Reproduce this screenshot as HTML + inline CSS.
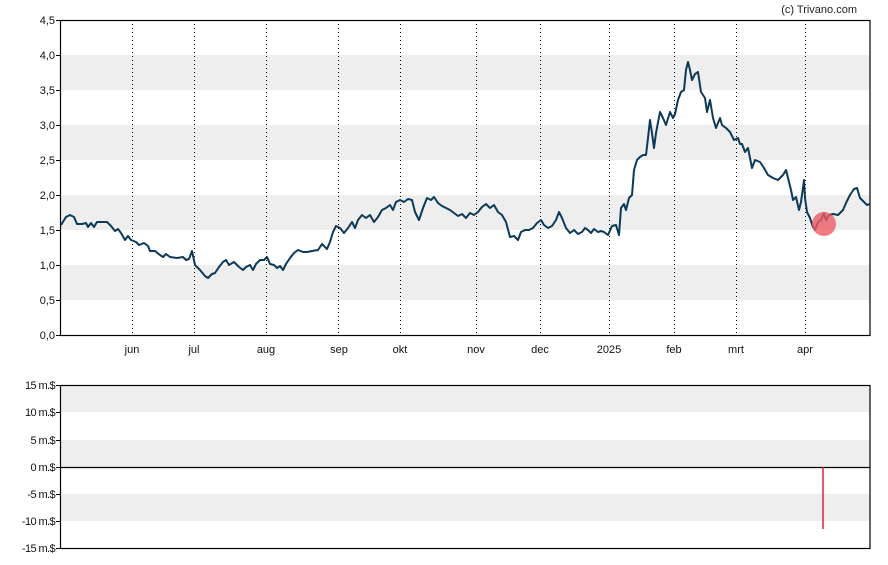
<!DOCTYPE html>
<html><head><meta charset="utf-8"><style>
html,body{margin:0;padding:0;background:#fff;}
svg{display:block;font-family:"Liberation Sans",sans-serif;}
</style></head><body>
<svg width="888" height="565" viewBox="0 0 888 565" xmlns="http://www.w3.org/2000/svg">
<rect width="888" height="565" fill="#fff"/>
<text x="857" y="13" font-size="11" text-anchor="end" fill="#222">(c) Trivano.com</text>
<g fill="#eeeeee">
<rect x="61" y="55" width="809" height="35"/>
<rect x="61" y="125" width="809" height="35"/>
<rect x="61" y="195" width="809" height="35"/>
<rect x="61" y="265" width="809" height="35"/>
</g>
<g stroke="#000" stroke-width="1" stroke-dasharray="1,3">
<line x1="132.5" y1="20" x2="132.5" y2="335"/><line x1="194.5" y1="20" x2="194.5" y2="335"/>
<line x1="266.5" y1="20" x2="266.5" y2="335"/><line x1="338.5" y1="20" x2="338.5" y2="335"/>
<line x1="400.5" y1="20" x2="400.5" y2="335"/><line x1="476.5" y1="20" x2="476.5" y2="335"/>
<line x1="540.5" y1="20" x2="540.5" y2="335"/><line x1="609.5" y1="20" x2="609.5" y2="335"/>
<line x1="674.5" y1="20" x2="674.5" y2="335"/><line x1="736.5" y1="20" x2="736.5" y2="335"/>
<line x1="805.5" y1="20" x2="805.5" y2="335"/>
</g>
<rect x="60.5" y="20.5" width="809.5" height="315" fill="none" stroke="#000" stroke-width="1.2"/>
<g stroke="#000"><line x1="56" y1="20.5" x2="60" y2="20.5"/><line x1="56" y1="55.5" x2="60" y2="55.5"/><line x1="56" y1="90.5" x2="60" y2="90.5"/><line x1="56" y1="125.5" x2="60" y2="125.5"/><line x1="56" y1="160.5" x2="60" y2="160.5"/><line x1="56" y1="195.5" x2="60" y2="195.5"/><line x1="56" y1="230.5" x2="60" y2="230.5"/><line x1="56" y1="265.5" x2="60" y2="265.5"/><line x1="56" y1="300.5" x2="60" y2="300.5"/><line x1="56" y1="335.5" x2="60" y2="335.5"/></g>
<g font-size="11" text-anchor="end" fill="#111">
<text x="55" y="24">4,5</text><text x="55" y="59">4,0</text><text x="55" y="94">3,5</text><text x="55" y="129">3,0</text><text x="55" y="164">2,5</text><text x="55" y="199">2,0</text><text x="55" y="234">1,5</text><text x="55" y="269">1,0</text><text x="55" y="304">0,5</text><text x="55" y="339">0,0</text>
</g>
<g font-size="11" text-anchor="middle" fill="#111">
<text x="132" y="353">jun</text><text x="194" y="353">jul</text><text x="266" y="353">aug</text><text x="339" y="353">sep</text><text x="400" y="353">okt</text><text x="476" y="353">nov</text><text x="540" y="353">dec</text><text x="609" y="353">2025</text><text x="674" y="353">feb</text><text x="736" y="353">mrt</text><text x="805" y="353">apr</text>
</g>
<polyline fill="none" stroke="#0d3a58" stroke-width="2" stroke-linejoin="round" points="61,225 66,217 70,215 74,217 77,224 82,224 86,223 88,227 91,223 94,227 97,222 107,222 111,226 115,231 118,229 121,233 125,240 128,236 131,240 136,242 139,245 144,243 148,246 150,251 155,251 160,255 163,257 166,254 170,257 177,258 183,257 186,260 189,259 192,251 195,265 200,270 205,276 208,278 212,274 215,273 219,267 223,262 226,260 229,265 234,262 239,267 243,270 246,267 250,265 253,270 256,264 260,260 264,260 267,257 270,264 274,265 277,268 280,266 283,270 286,264 290,258 294,253 298,250 303,252 307,252 312,251 318,250 322,244 327,249 330,242 333,232 336,226 340,228 344,233 348,228 352,222 355,228 358,220 362,215 366,218 370,215 374,222 378,217 382,210 386,208 390,205 393,210 396,202 400,200 404,202 408,199 412,200 415,212 419,220 423,208 427,198 431,200 434,197 438,203 442,206 446,208 450,210 454,213 458,216 462,214 466,218 470,213 474,215 478,212 482,207 486,204 490,208 494,205 498,212 502,215 506,222 510,237 514,236 518,240 521,232 525,230 529,230 533,228 537,223 541,220 544,225 548,228 552,226 556,220 559,212 562,218 566,228 570,233 574,230 578,234 582,232 585,228 588,230 591,233 594,229 598,232 601,231 604,232 608,235 612,226 616,225 619,235 621,208 624,204 626,210 629,198 632,195 634,170 637,160 640,157 643,155 646,155 648,138 650,120 652,133 654,148 656,133 660,112 663,118 666,125 670,112 673,118 675,114 678,100 681,92 684,90 686,70 688,62 690,70 692,80 695,74 698,72 701,92 705,98 707,112 710,100 713,118 716,128 720,118 722,125 726,128 730,132 734,140 738,138 740,144 742,144 745,152 748,148 752,168 755,160 760,162 764,168 768,175 773,178 778,180 783,175 786,170 788,178 791,190 793,200 796,197 799,210 801,202 804,180 805,198 807,212 810,218 813,227 815,230 818,222 821,220 824,213 826,220 829,215 833,214 838,215 843,210 846,203 850,195 854,189 857,188 860,198 864,202 867,205 870,204"/>
<circle cx="824" cy="224" r="12" fill="#ee5a64" fill-opacity="0.8"/>
<!-- bottom chart -->
<g fill="#eeeeee">
<rect x="61" y="385" width="809" height="27"/>
<rect x="61" y="440" width="809" height="27"/>
<rect x="61" y="494" width="809" height="27"/>
</g>
<rect x="60.5" y="385.5" width="809.5" height="163" fill="none" stroke="#000" stroke-width="1.2"/>
<line x1="60" y1="467.5" x2="870" y2="467.5" stroke="#000" stroke-width="1.2"/>
<line x1="823" y1="467" x2="823" y2="529" stroke="#e0203a" stroke-width="1.5"/>
<g stroke="#000"><line x1="56" y1="385.5" x2="60" y2="385.5"/><line x1="56" y1="412.5" x2="60" y2="412.5"/><line x1="56" y1="440.5" x2="60" y2="440.5"/><line x1="56" y1="467.5" x2="60" y2="467.5"/><line x1="56" y1="494.5" x2="60" y2="494.5"/><line x1="56" y1="521.5" x2="60" y2="521.5"/><line x1="56" y1="548.5" x2="60" y2="548.5"/></g>
<g font-size="11" text-anchor="end" fill="#111" letter-spacing="-0.6">
<text x="55" y="389">15 m.$</text><text x="55" y="416">10 m.$</text><text x="55" y="444">5 m.$</text><text x="55" y="471">0 m.$</text><text x="55" y="498">-5 m.$</text><text x="55" y="525">-10 m.$</text><text x="55" y="552">-15 m.$</text>
</g>
</svg>
</body></html>
